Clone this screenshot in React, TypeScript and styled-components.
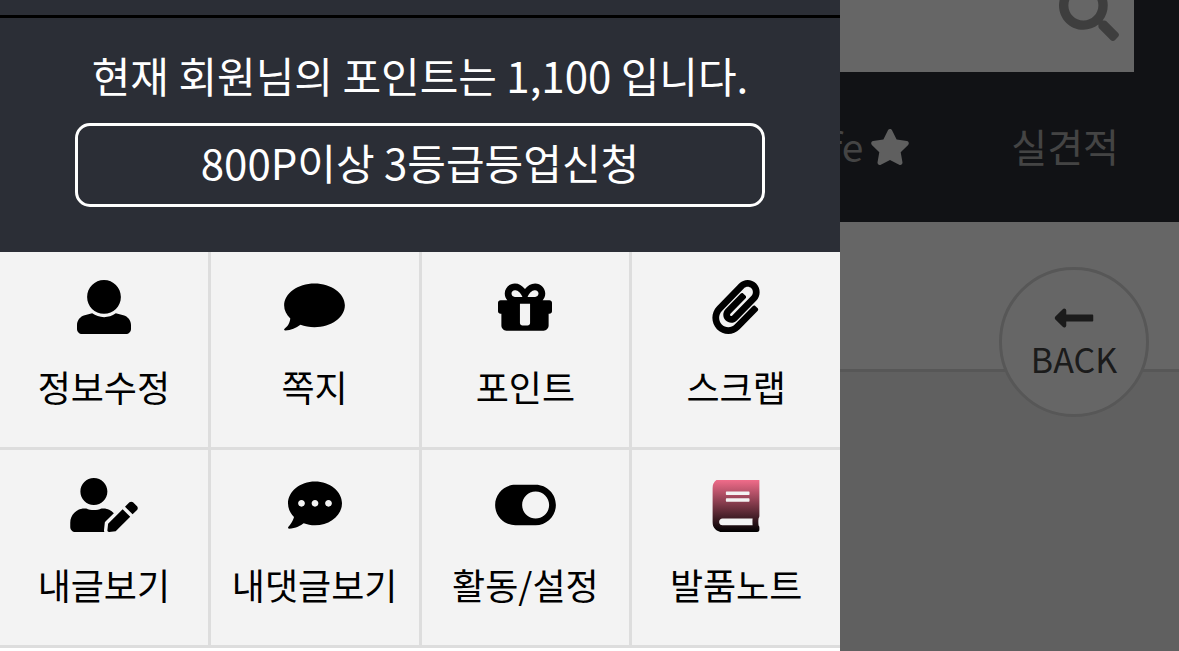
import React from "react";
import styled, { createGlobalStyle } from "styled-components";
import {
  FaBook,
  FaCommentDots,
  FaLongArrowAltLeft,
  FaPaperclip,
  FaSearch,
  FaStar,
  FaToggleOn,
  FaUserEdit,
} from "react-icons/fa";

const GlobalStyle = createGlobalStyle`
  * { box-sizing: border-box; }
  html, body, #root { height: 100%; }
  body {
    margin: 0;
    overflow: hidden;
    background: #f1f1f1;
    font-family: "Noto Sans CJK KR", "Noto Sans", sans-serif;
  }
  a { color: inherit; text-decoration: none; }
  button, input { font: inherit; }
`;

const Screen = styled.div`
  position: relative;
  min-height: 100%;
  overflow: hidden;
`;

const SiteHeader = styled.header`
  background: #2b2e36;
`;

const SearchForm = styled.form`
  display: flex;
  align-items: center;
  height: 122px;
  margin: -50px 45px 0;
  padding-right: 15px;
  background: #fff;
`;

const SearchInput = styled.input`
  flex: 1;
  min-width: 0;
  height: 100%;
  padding: 0 30px;
  border: 0;
  background: transparent;
  font-size: 42px;
`;

const SearchButton = styled.button`
  display: flex;
  padding: 0;
  border: 0;
  background: none;
  color: #9c9c9c;
  font-size: 60px;
`;

const SiteNav = styled.nav`
  display: flex;
  justify-content: flex-end;
  align-items: center;
  gap: 100px;
  height: 150px;
  padding: 0 60px 4px 0;
  color: #aaa;
  font-size: 39px;
  line-height: 60px;
`;

const NavLink = styled.a`
  display: flex;
  align-items: center;
  gap: 6px;

  svg {
    width: 42px;
    height: 36px;
    margin-top: 4px;
    color: #eee;
  }
`;

const TitleBar = styled.div`
  height: 150px;
  border-bottom: 3px solid #d9d9d9;
  background: #fff;
`;

const BackButton = styled.button`
  position: absolute;
  top: 267px;
  right: 30px;
  display: flex;
  flex-direction: column;
  align-items: center;
  justify-content: center;
  width: 150px;
  height: 150px;
  padding: 0 0 10px;
  border: 3px solid #d9d9d9;
  border-radius: 50%;
  background: #fff;
  color: #444;
  font-size: 34px;
  line-height: 38px;

  svg { font-size: 44px; }
`;

const Overlay = styled.div`
  position: absolute;
  inset: 0;
  background: rgba(0, 0, 0, 0.6);
`;

const Drawer = styled.aside`
  position: absolute;
  top: 0;
  bottom: 0;
  left: 0;
  width: 840px;
  max-width: 100%;
  background: #fff;
`;

const DrawerTop = styled.div`
  height: 18px;
  border-bottom: 3px solid #000;
  background: #2b2e36;
`;

const PointPanel = styled.section`
  display: flex;
  flex-direction: column;
  gap: 18px;
  padding: 27px 75px 45px;
  background: #2b2e36;
  color: #fff;
  font-size: 42px;
  line-height: 60px;
  text-align: center;
`;

const PointText = styled.p`
  margin: 0;
  white-space: nowrap;
`;

const UpgradeButton = styled.button`
  height: 84px;
  padding: 0 0 6px;
  border: 3px solid #fff;
  border-radius: 15px;
  background: none;
  color: inherit;
`;

const MenuGrid = styled.nav`
  display: grid;
  grid-template-columns: repeat(4, 1fr);
  gap: 3px;
  border-bottom: 3px solid #ddd;
  background: #ddd;
`;

const MenuItem = styled.a`
  display: flex;
  flex-direction: column;
  align-items: center;
  height: 195px;
  padding-top: 28px;
  background: #f3f3f3;
  color: #000;
  font-size: 36px;
  line-height: 54px;
  white-space: nowrap;
`;

const MenuIcon = styled.span<{ $width: number }>`
  display: flex;
  justify-content: center;
  margin-bottom: 25px;

  svg {
    width: ${({ $width }) => $width}px;
    height: 54px;
  }
`;

const GradientDefs = styled.svg`
  position: absolute;
  width: 0;
  height: 0;
`;

const NoteIcon = styled(FaBook)`
  path { fill: url(#note-gradient); clip-path: url(#note-clip); }
`;

const UserIcon = () => (
  <svg viewBox="0 0 512 512" fill="currentColor" aria-hidden="true">
    <path d="M256 0c88.366 0 160 71.634 160 160s-71.634 160-160 160S96 248.366 96 160 167.634 0 256 0zm183.283 333.821l-71.313-17.828c-74.923 53.89-165.738 41.864-223.94 0l-71.313 17.828C29.981 344.505 0 382.903 0 426.955V464c0 26.51 21.49 48 48 48h416c26.51 0 48-21.49 48-48v-37.045c0-44.052-29.981-82.45-72.717-93.134z" />
  </svg>
);

const CommentIcon = () => (
  <svg viewBox="0 0 576 512" fill="currentColor" aria-hidden="true">
    <path d="M576 240c0 115-129 208-288 208-48.3 0-93.9-8.6-133.9-23.8-40.3 31.2-89.8 50.3-142.4 55.7-5.2.6-10.2-2.8-11.5-7.7-1.3-5 2.7-8.1 6.6-11.8 19.3-18.4 42.7-32.8 51.9-94.6C21.9 330.9 0 287.3 0 240 0 125.1 129 32 288 32s288 93.1 288 208z" />
  </svg>
);

const GiftIcon = () => (
  <svg viewBox="0 0 512 512" fill="currentColor" aria-hidden="true">
    <path d="M488 192h-64.512C438.72 175.003 448 152.566 448 128c0-52.935-43.065-96-96-96-41.997 0-68.742 20.693-95.992 54.15C226.671 50.192 199.613 32 160 32c-52.935 0-96 43.065-96 96 0 24.566 9.28 47.003 24.512 64H24c-13.255 0-24 10.745-24 24v80c0 13.255 10.745 24 24 24h8v112c0 26.51 21.49 48 48 48h352c26.51 0 48-21.49 48-48V320h8c13.255 0 24-10.745 24-24v-80c0-13.255-10.745-24-24-24zm-208-32c24-56 55.324-64 72-64 17.645 0 32 14.355 32 32s-14.355 32-32 32h-72zM160 96c16.676 0 48 8 72 64h-72c-17.645 0-32-14.355-32-32s14.355-32 32-32zm48 128h96v184c0 13.255-10.745 24-24 24h-48c-13.255 0-24-10.745-24-24V224z" />
  </svg>
);

const menu = [
  { label: "정보수정", width: 54, icon: <UserIcon /> },
  { label: "쪽지", width: 61, icon: <CommentIcon /> },
  { label: "포인트", width: 54, icon: <GiftIcon /> },
  { label: "스크랩", width: 48, icon: <FaPaperclip /> },
  { label: "내글보기", width: 68, icon: <FaUserEdit /> },
  { label: "내댓글보기", width: 54, icon: <FaCommentDots /> },
  { label: "활동/설정", width: 61, icon: <FaToggleOn /> },
  { label: "발품노트", width: 48, icon: <NoteIcon /> },
];

export default function App() {
  return (
    <Screen>
      <GlobalStyle />
      <SiteHeader>
        <SearchForm role="search">
          <SearchInput type="search" aria-label="검색어" />
          <SearchButton type="button" aria-label="검색">
            <FaSearch />
          </SearchButton>
        </SearchForm>
        <SiteNav>
          <NavLink href="#life">
            fe
            <FaStar />
          </NavLink>
          <NavLink href="#estimate">실견적</NavLink>
        </SiteNav>
      </SiteHeader>
      <TitleBar />
      <BackButton type="button">
        <FaLongArrowAltLeft />
        BACK
      </BackButton>
      <Overlay />
      <Drawer>
        <DrawerTop />
        <PointPanel>
          <PointText>현재 회원님의 포인트는 1,100 입니다.</PointText>
          <UpgradeButton type="button">800P이상 3등급등업신청</UpgradeButton>
        </PointPanel>
        <GradientDefs aria-hidden="true">
          <defs>
            <linearGradient id="note-gradient" gradientUnits="userSpaceOnUse" x1="0" y1="19" x2="0" y2="512">
              <stop offset="0" stopColor="#f06c8a" />
              <stop offset="1" stopColor="#000" />
            </linearGradient>
            <clipPath id="note-clip">
              <rect x="0" y="19" width="448" height="493" />
            </clipPath>
          </defs>
        </GradientDefs>
        <MenuGrid>
          {menu.map(({ label, width, icon }) => (
            <MenuItem key={label} href="#menu">
              <MenuIcon $width={width}>{icon}</MenuIcon>
              {label}
            </MenuItem>
          ))}
        </MenuGrid>
      </Drawer>
    </Screen>
  );
}
